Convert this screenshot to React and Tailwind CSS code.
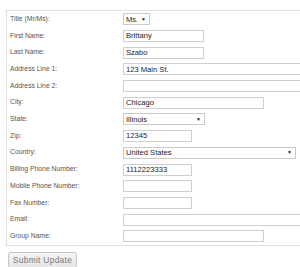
const rows = [
  { label: 'Title (Mr/Ms):', kind: 'select', value: 'Ms.', w: 'w-[27px]' },
  { label: 'First Name:', value: 'Brittany', w: 'w-[81px]' },
  { label: 'Last Name:', value: 'Szabo', w: 'w-[81px]' },
  { label: 'Address Line 1:', value: '123 Main St.', w: 'w-[200px]' },
  { label: 'Address Line 2:', value: '', w: 'w-[200px]' },
  { label: 'City:', value: 'Chicago', w: 'w-[141px]' },
  { label: 'State:', kind: 'select', value: 'Illinois', w: 'w-[82px]' },
  { label: 'Zip:', value: '12345', w: 'w-[69px]' },
  { label: 'Country:', kind: 'select', value: 'United States', w: 'w-[173px]' },
  { label: 'Billing Phone Number:', value: '1112223333', w: 'w-[69px]' },
  { label: 'Mobile Phone Number:', value: '', w: 'w-[69px]' },
  { label: 'Fax Number:', value: '', w: 'w-[69px]' },
  { label: 'Email:', value: '', w: 'w-[200px]' },
  { label: 'Group Name:', value: '', w: 'w-[141px]' },
]

function Field({ row }) {
  if (row.kind === 'select') {
    return (
      <div className={`${row.w} h-[12px] border border-[#c9c9c9] bg-white flex items-center justify-between pl-[2px] pr-[3px] text-[7.6px] text-[#222] leading-none shrink-0`}>
        <span>{row.value}</span>
        <span className="text-[5px]">▼</span>
      </div>
    )
  }
  return (
    <div className={`${row.w} h-[12px] border border-[#cfcfcf] bg-white flex items-center px-[2px] text-[7.6px] text-[#222] leading-none shrink-0`}>
      {row.value}
    </div>
  )
}

export default function App() {
  return (
    <div className="w-[300px] h-[267px] overflow-hidden bg-white pt-[10px] pl-[6px] font-['Liberation_Sans',Arial,sans-serif]">
      <div className="w-[320px] border border-r-0 border-[#e2e2e2]">
        {rows.map((row) => (
          <div key={row.label} className="h-[16.7px] flex items-center">
            <div className="w-[116px] pl-[3px] text-[6.8px] text-[#555] leading-none">{row.label}</div>
            <Field row={row} />
          </div>
        ))}
      </div>
      <button
        type="button"
        className="mt-[1px] ml-[2px] w-[69px] h-[16px] rounded-[3px] border border-[#c4c4c4] bg-gradient-to-b from-[#f6f6f6] to-[#e6e6e6] text-[8.4px] text-[#777] tracking-[0.3px] leading-none"
      >
        Submit Update
      </button>
    </div>
  )
}
